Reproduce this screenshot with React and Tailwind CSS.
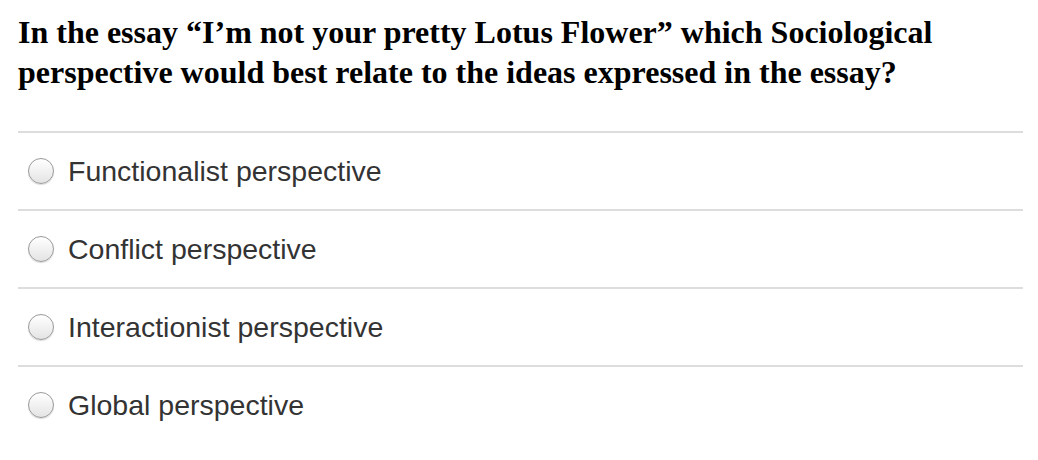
const options = [
  'Functionalist perspective',
  'Conflict perspective',
  'Interactionist perspective',
  'Global perspective',
];

function Radio() {
  return (
    <span className="w-[26px] h-[26px] shrink-0 rounded-full border border-[#9a9a9a] bg-gradient-to-b from-[#ffffff] to-[#e4e4e4] shadow-[0_1px_1px_rgba(0,0,0,0.15)]"></span>
  );
}

export default function App() {
  return (
    <div className="w-[1038px] h-[460px] bg-white pl-[18px] pr-[15px] pt-[12px]">
      <h1 className="font-['Liberation_Serif',serif] font-bold text-[32px] leading-[40px] text-black pb-[39px]">
        In the essay “I’m not your pretty Lotus Flower” which Sociological perspective would best relate to the ideas expressed in the essay?
      </h1>
      <div>
        {options.map((o) => (
          <label key={o} className="flex items-center gap-[14px] h-[78px] border-t-2 border-[#dddddd] pl-[10px]">
            <Radio />
            <span className="font-['Liberation_Sans',sans-serif] text-[28.5px] text-[#333333]">{o}</span>
          </label>
        ))}
      </div>
    </div>
  );
}
